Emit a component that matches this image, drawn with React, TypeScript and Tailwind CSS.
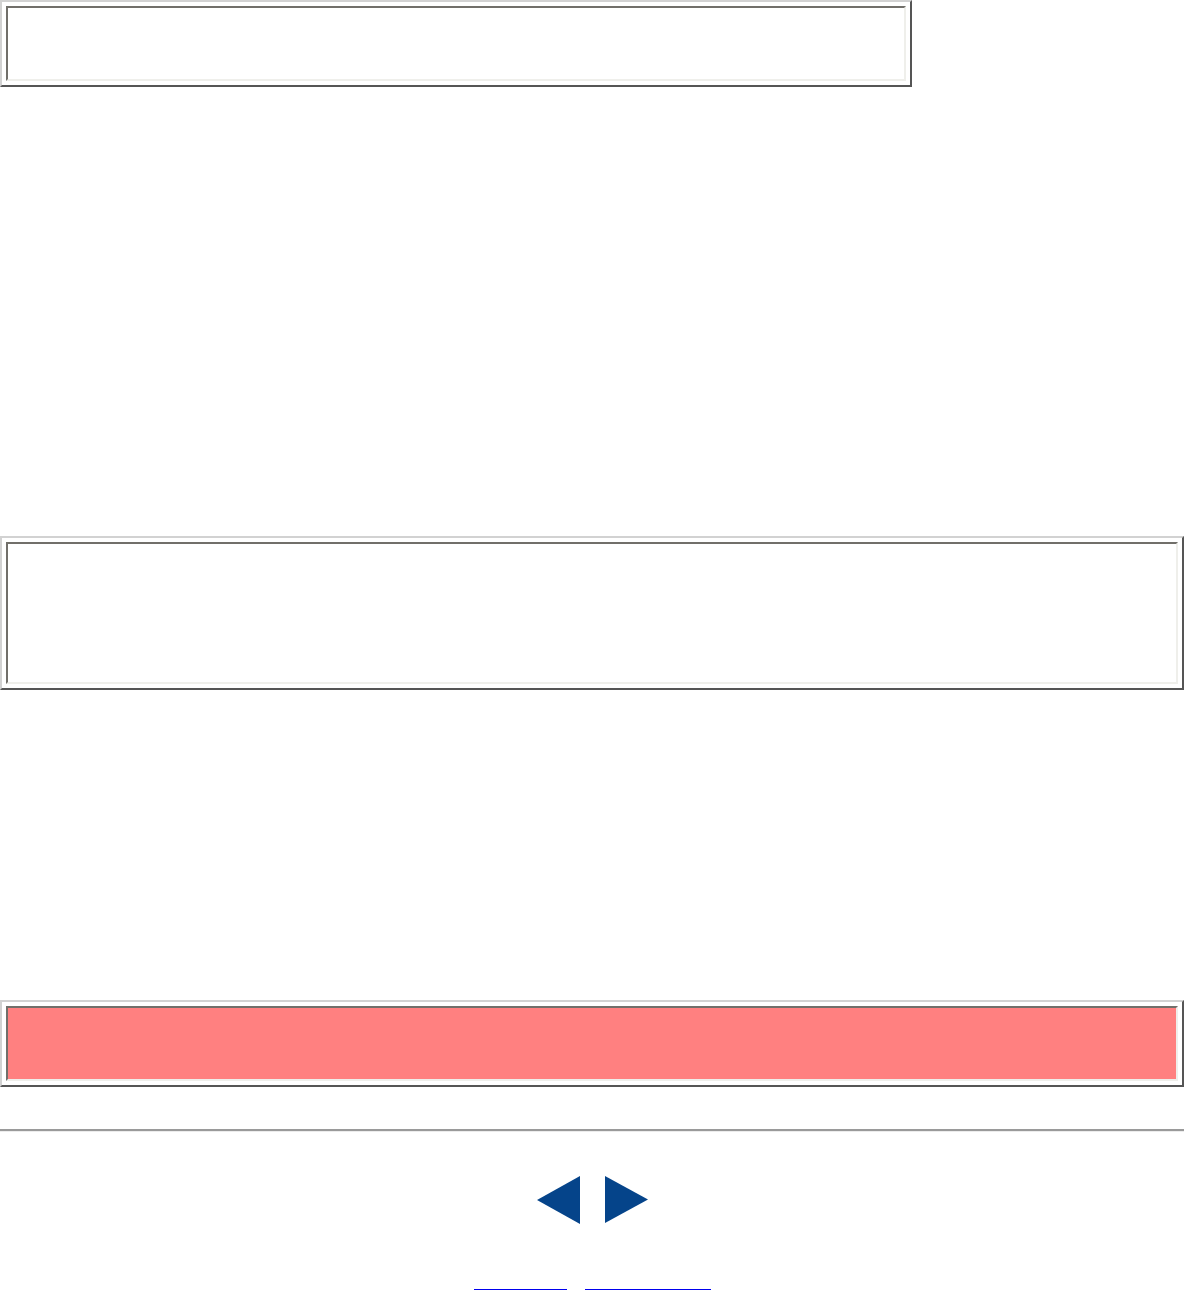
import type { ReactNode } from 'react'

function Box({
  width,
  cellHeight,
  cellClass = 'bg-white',
  className = '',
  children,
}: {
  width: string
  cellHeight: string
  cellClass?: string
  className?: string
  children?: ReactNode
}) {
  return (
    <div
      className={`${width} ${className} border-2 border-t-[#d2d2d2] border-l-[#d2d2d2] border-r-[#555555] border-b-[#555555] bg-white p-[4px]`}
    >
      <div
        className={`${cellHeight} ${cellClass} border-2 border-t-[#716f6a] border-l-[#716f6a] border-r-[#efefeb] border-b-[#efefeb]`}
      >
        {children}
      </div>
    </div>
  )
}

export default function App() {
  return (
    <div className="w-[1185px] min-h-[1290px] bg-white font-['Liberation_Serif',serif] text-black">
      <Box width="w-[912px]" cellHeight="h-[75px]" />

      <Box width="w-[1184px]" cellHeight="h-[142px]" className="mt-[449px]" />

      <Box
        width="w-[1184px]"
        cellHeight="h-[75px]"
        cellClass="bg-[#ff8080]"
        className="mt-[310px]"
      />

      <hr className="mt-[42px] w-[1184px] border-0 border-t-2 border-b border-t-[#9a9a9a] border-b-[#ececec]" />

      <div className="mt-[44px] flex justify-center gap-[25px] pr-[1px]">
        <a href="#prev" aria-label="Previous">
          <svg width="43" height="48" viewBox="0 0 43 48">
            <polygon points="43,0 43,48 0,24" fill="#05448a" />
          </svg>
        </a>
        <a href="#next" aria-label="Next">
          <svg width="43" height="48" viewBox="0 0 43 48">
            <polygon points="0,0 0,47 43,23.5" fill="#05448a" />
          </svg>
        </a>
      </div>

      <div className="mt-[43px] flex h-[24px] justify-center gap-[18px] pr-[1px]">
        <a
          href="#prev"
          className="block h-full w-[93px] border-b-2 border-[#0000ee] text-[#0000ee]"
        >
          {'\u00a0'}
        </a>
        <a
          href="#next"
          className="block h-full w-[126px] border-b-2 border-[#0000ee] text-[#0000ee]"
        >
          {'\u00a0'}
        </a>
      </div>
    </div>
  )
}
